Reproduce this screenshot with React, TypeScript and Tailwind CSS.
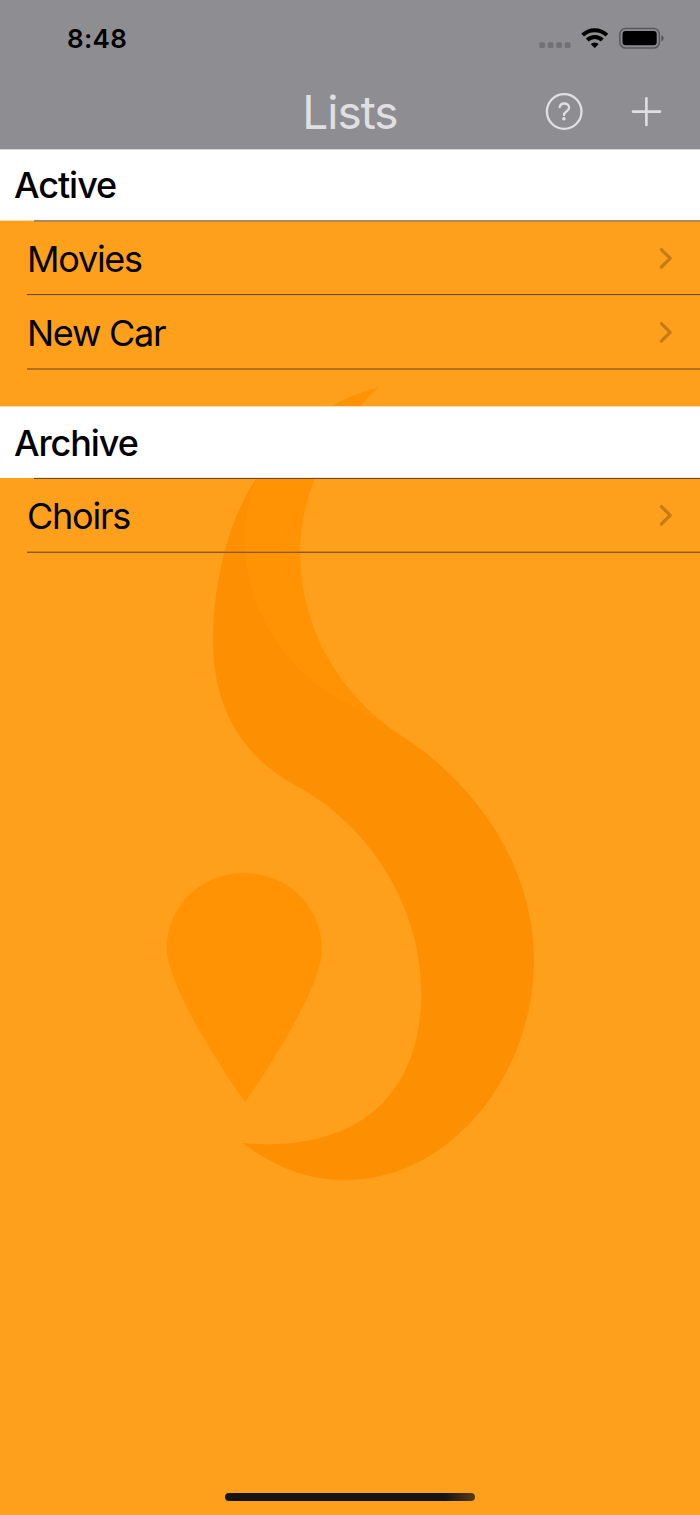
import React from "react";

function Watermark() {
  return (
    <svg className="absolute inset-0" width="700" height="1515" viewBox="0 0 700 1515" aria-hidden="true">
      <path
        fill="#fd9002"
        d="M405 738C474 783 534 865 534 960C534 1075 450 1180 346.5 1180C306 1180 276 1167 242.5 1143C370 1154 421.3 1083 421.3 993C421.3 908 371 826 295 785C242 757 213 706 213 642C213 580 230 515 257 478L300 552C300 630 341 698 405 738Z"
      />
      <path
        fill="#ff9304"
        d="M379 387C330 400 285 430 257 478C249 495 245 515 245 545C245 610 290 675 345 702C365 712 380 722 405 738C341 698 300 630 300 552C300 494 330 432 379 387Z"
      />
      <path
        fill="#ff9304"
        d="M166.7 948C166.7 906 201 873 244 873S322 906 322 950C322 985 268 1070 245 1102C222 1070 166.7 985 166.7 948Z"
      />
    </svg>
  );
}

function StatusIcons() {
  return (
    <svg width="130" height="30" viewBox="535 23 130 30" aria-hidden="true">
      <g fill="#727176">
        <rect x="539.2" y="42.2" width="5.8" height="5.8" rx="1.5" />
        <rect x="547.7" y="42.2" width="5.8" height="5.8" rx="1.5" />
        <rect x="556.2" y="42.2" width="5.8" height="5.8" rx="1.5" />
        <rect x="564.7" y="42.2" width="5.8" height="5.8" rx="1.5" />
      </g>
      <g fill="none" stroke="#000" strokeWidth="4">
        <path d="M582.6 35.2A17.3 17.3 0 0 1 606.9 35.2" />
        <path d="M587.2 40A10.8 10.8 0 0 1 602.3 40" />
      </g>
      <path d="M590.8 43.9A5.8 5.8 0 0 1 598.6 43.9L595.4 47.5Q594.7 48.2 594 47.5Z" />
      <rect x="619.9" y="28.6" width="39.4" height="19.4" rx="5.6" fill="none" stroke="#58575b" strokeWidth="1.5" />
      <rect x="622.5" y="31.1" width="34.2" height="14.2" rx="3" />
      <path fill="#58575b" d="M661.3 34.9Q663.7 35.9 663.7 38.2T661.3 41.5Z" />
    </svg>
  );
}

function HelpIcon() {
  return (
    <svg width="38" height="38" viewBox="545 93 38 38" fill="none" stroke="#e0e0e2" strokeLinecap="round" strokeLinejoin="round">
      <circle cx="564.2" cy="111.5" r="17.3" strokeWidth="2.3" />
      <path strokeWidth="2.3" d="M559.7 107.2C560 104.8 561.8 103.5 564.3 103.5C567 103.5 569.1 105.1 569.1 107.5C569.1 109.5 568 110.5 566.4 111.5C564.7 112.6 564 113.3 564 115" />
      <circle cx="563.9" cy="118.7" r="1.8" fill="#e0e0e2" stroke="none" />
    </svg>
  );
}

function PlusIcon() {
  return (
    <svg width="32" height="32" viewBox="630 96 32 32" stroke="#e0e0e2" strokeWidth="2.6" strokeLinecap="round">
      <path d="M633 111.6H660M646.4 98.2V125" />
    </svg>
  );
}

function Row({ title, className, lines }: { title: string; className: string; lines: string }) {
  return (
    <div className={`flex flex-col pl-[27px] ${className}`}>
      <div className="flex flex-1 items-center justify-between pr-[26px]">
        <span className="pt-px text-[36px] leading-[44px] tracking-[-1.25px]">{title}</span>
        <svg width="15" height="24" viewBox="0 0 15 24" fill="none" stroke="#c67c16" strokeWidth="3.3" strokeLinecap="round" strokeLinejoin="round">
          <path d="M2.4 3.6L11.2 12.3L2.4 21" />
        </svg>
      </div>
      <div className={`h-[2px] border-y ${lines}`} />
    </div>
  );
}

export default function App() {
  return (
    <div className="relative h-[1515px] w-[700px] overflow-hidden bg-[#ffa01c] font-['Inter',sans-serif] text-black">
      <Watermark />
      <div className="relative flex h-full flex-col">
        <header className="flex h-[150px] flex-col border-b border-[#d4d4d6] bg-[#8e8d92]">
          <div className="flex h-[75px] items-center justify-between pr-[35px] pl-[67px]">
            <span className="pt-[2px] text-[26px] leading-8 font-semibold tracking-[0.3px]">8:48</span>
            <StatusIcons />
          </div>
          <div className="grid flex-1 grid-cols-[1fr_auto_1fr] items-center">
            <span />
            <h1 className="text-[46px] leading-[56px] font-normal tracking-[-1px] text-[#e0e0e2]">Lists</h1>
            <div className="flex items-center justify-end gap-[47px] pr-[38px]">
              <button aria-label="Help"><HelpIcon /></button>
              <button aria-label="Add"><PlusIcon /></button>
            </div>
          </div>
        </header>

        <h2 className="flex h-[70px] items-center bg-white pl-[14px] text-[36px] leading-[44px] font-medium tracking-[-1.05px]">Active</h2>
        <div className="flex h-[2px]">
          <div className="h-px w-[34px] bg-[#ffdca8]" />
          <div className="flex-1 border-y border-t-[#8e8f94] border-b-[#c98327]" />
        </div>
        <Row title="Movies" className="h-[74px]" lines="border-t-[#70491a] border-b-[#ee961d]" />
        <Row title="New Car" className="h-[74px]" lines="border-y-[#b27118]" />

        <div className="mt-9 h-px bg-[#ffdca8]" />
        <h2 className="flex h-[70px] items-center bg-white pt-px pl-[14px] text-[36px] leading-[44px] font-medium tracking-[-1.1px]">Archive</h2>
        <div className="flex h-[2px]">
          <div className="h-px w-[34px] bg-white" />
          <div className="flex-1 border-y border-t-[#e7e7f0] border-b-[#6b4a26]" />
        </div>
        <Row title="Choirs" className="h-[74px]" lines="border-t-[#cf8117] border-b-[#91590f]" />

        <div className="mt-auto mb-[14px] h-[8px] w-[250px] self-center rounded-full bg-linear-to-r from-[#151515] from-88% to-[#5a3c14]" />
      </div>
    </div>
  );
}
